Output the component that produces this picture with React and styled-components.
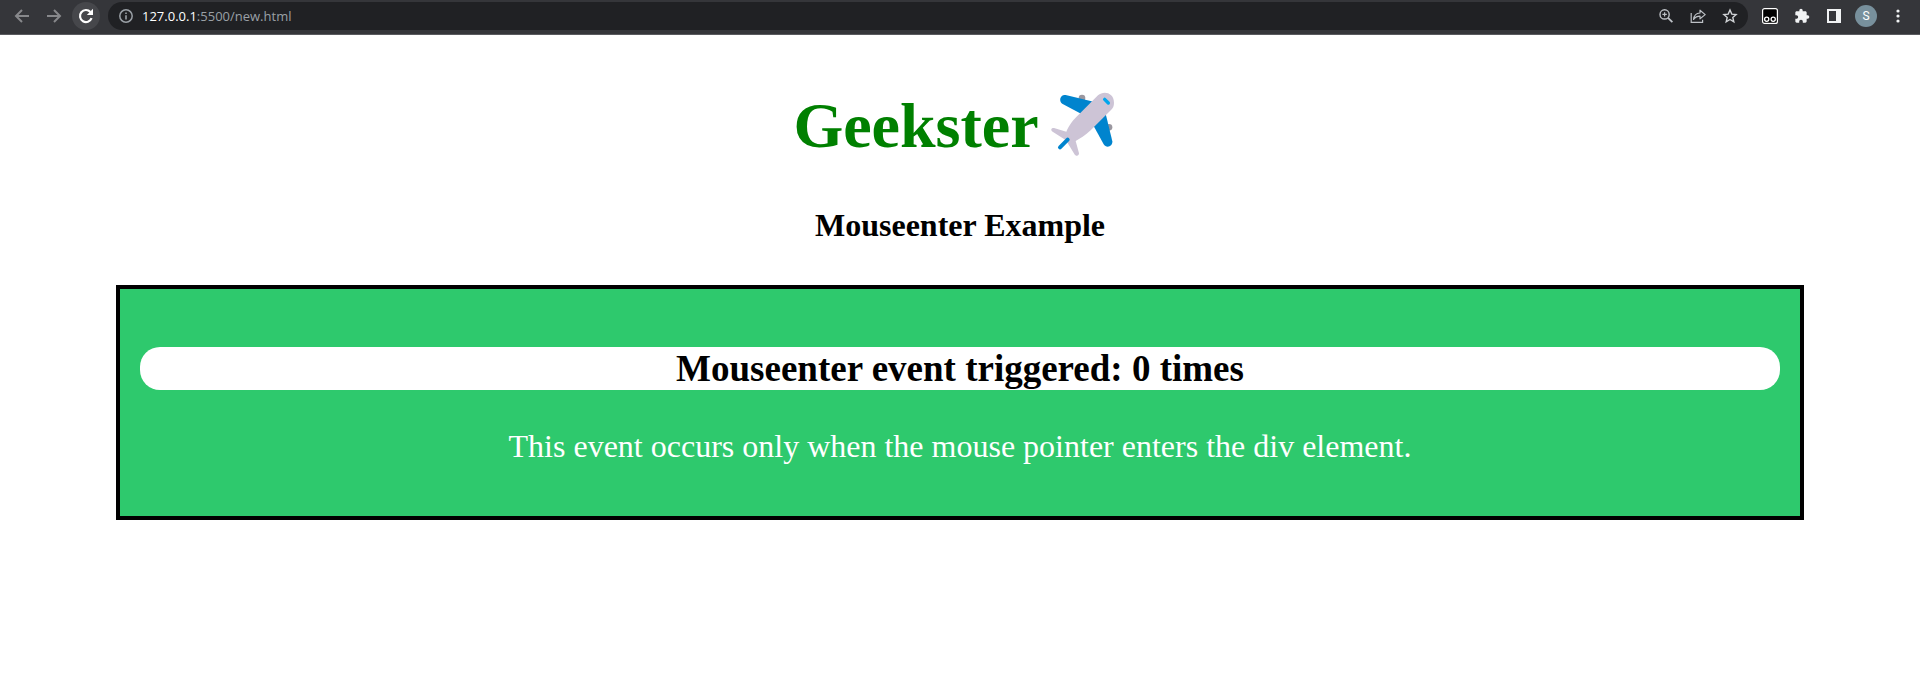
import React, { useState } from "react";
import styled, { createGlobalStyle } from "styled-components";

const GlobalStyle = createGlobalStyle`
  *, *::before, *::after { box-sizing: border-box; }
  body {
    margin: 0;
    background: #fff;
    color: #000;
    font-family: "Liberation Serif", "Times New Roman", serif;
  }
`;

const Toolbar = styled.header`
  display: flex;
  align-items: center;
  gap: 6px;
  padding: 2px 6px 4px;
  background: #35363a;
  border-bottom: 1px solid #5a5b5f;
`;

const IconGroup = styled.div`
  display: flex;
  align-items: center;
`;

const IconButton = styled.button`
  display: flex;
  align-items: center;
  justify-content: center;
  width: 32px;
  height: 28px;
  padding: 0;
  border: 0;
  background: none;
  color: ${(p) => p.$color || "#f1f3f4"};
`;

const Disc = styled.span`
  display: flex;
  align-items: center;
  justify-content: center;
  width: ${(p) => p.$size}px;
  height: ${(p) => p.$size}px;
  border-radius: 50%;
  background: ${(p) => p.$fill};
  color: #fff;
  font: 12px/22px Roboto, sans-serif;
`;

const Omnibox = styled.div`
  display: flex;
  flex: 1;
  align-items: center;
  min-width: 0;
  height: 28px;
  padding: 0 2px;
  border-radius: 14px;
  background: #202124;
`;

const Address = styled.a`
  flex: 1;
  min-width: 0;
  overflow: hidden;
  white-space: nowrap;
  color: #9aa0a6;
  text-decoration: none;
  font: 13px/20px "Open Sans", "Segoe UI", sans-serif;
`;

const Host = styled.span`
  color: #fff;
`;

const Page = styled.main`
  padding: 54px 116px 0;
  text-align: center;
  font-size: 32px;
  line-height: 37px;
`;

const Title = styled.h1`
  display: flex;
  justify-content: center;
  margin: 0 0 44px;
  color: green;
  font-size: 64px;
  line-height: 74px;
`;

const Subtitle = styled.h2`
  margin: 0 0 41px;
  font-size: 32px;
`;

const EventBox = styled.div`
  display: flow-root;
  padding: 20px;
  border: 4px solid #000;
  background: #2ec96d;
  color: #fff;
`;

const Counter = styled.h3`
  margin: 38px 0;
  border-radius: 20px;
  background: #fff;
  color: #000;
  font-size: 37px;
  line-height: 43px;
`;

const Note = styled.p`
  margin: 0 0 31px;
`;

function Icon({ size = 16, children, ...rest }) {
  return (
    <svg width={size} height={size} viewBox={`0 0 ${size} ${size}`} fill="none" stroke="currentColor" strokeWidth="1.6" aria-hidden="true" {...rest}>
      {children}
    </svg>
  );
}

function Plane() {
  return (
    <svg width="88" height="74" viewBox="-3 27 264 222" role="img" aria-label="airplane">
      <circle cx="126" cy="54" r="10" fill="#9a979f" />
      <circle cx="207" cy="142" r="10" fill="#9a979f" />
      <path d="M77 45 L164 66 L126 103 L68 72 C54 63 61 42 77 45Z" fill="#0084ce" />
      <path d="M197 101 L217 184 C218 201 198 205 191 193 L161 138Z" fill="#0084ce" />
      <path d="M174 46 C191 31 222 38 222 68 C222 78 219 84 213 90 L152 151 C136 166 119 177 107 183 L117 220 C117 230 106 229 103 222 L78 181 L38 155 C31 151 33 143 42 144 L79 155 C85 139 98 122 109 111Z" fill="#cdc4d6" />
      <path d="M194 58 L205 69" stroke="#00a6ed" strokeWidth="10" strokeLinecap="round" />
      <path d="M60 202 L83 179" stroke="#0084ce" strokeWidth="12" strokeLinecap="round" />
    </svg>
  );
}

function BrowserBar() {
  return (
    <Toolbar>
      <IconGroup>
        <IconButton aria-label="Back" $color="#87888b">
          <Icon strokeWidth="2"><path d="M15 8H2.500M8 2L2 8L8 14" /></Icon>
        </IconButton>
        <IconButton aria-label="Forward" $color="#87888b">
          <Icon strokeWidth="2"><path d="M1 8H13.500M8 2L14 8L8 14" /></Icon>
        </IconButton>
        <IconButton aria-label="Reload">
          <Disc $size={28} $fill="#46474b">
            <Icon strokeWidth="2.2">
              <path d="M13.6 10.2A6 6 0 1 1 12.4 3.9" />
              <path d="M15 .8V7H8.8Z" fill="currentColor" stroke="none" />
            </Icon>
          </Disc>
        </IconButton>
      </IconGroup>
      <Omnibox>
        <IconButton aria-label="Site information" $color="#9aa0a6">
          <Icon strokeWidth="1.5">
            <circle cx="8" cy="8" r="6.2" />
            <path d="M8 7.2V11.4M8 4.5V6" strokeWidth="1.6" />
          </Icon>
        </IconButton>
        <Address href="#"><Host>127.0.0.1</Host>:5500/new.html</Address>
        <IconButton aria-label="Zoom" $color="#bdc1c6">
          <Icon strokeWidth="1.4">
            <circle cx="6.6" cy="6.4" r="4.6" />
            <path d="M10 9.8L14.4 14.2" strokeWidth="1.8" />
            <path d="M6.6 4.2V8.6M4.4 6.4H8.8" strokeWidth="1.2" />
          </Icon>
        </IconButton>
        <IconButton aria-label="Share" $color="#bdc1c6">
          <Icon strokeWidth="1.2">
            <path d="M1.2 5V14.4H12.6V11.8" />
            <path d="M3.600 11.400C4 7.400 6.200 5.200 10 5V2.200L15.200 6.600L10 10.800V8.200C7.200 8.200 5.200 9.200 3.600 11.400Z" strokeLinejoin="round" />
          </Icon>
        </IconButton>
        <IconButton aria-label="Bookmark" $color="#d0d3d6">
          <Icon strokeWidth="1.4">
            <path d="M8 2L9.8 6.1L14.1 6.5L10.8 9.4L11.8 13.8L8 11.5L4.2 13.8L5.2 9.4L1.9 6.5L6.2 6.1Z" />
          </Icon>
        </IconButton>
      </Omnibox>
      <IconGroup>
        <IconButton aria-label="Tampermonkey">
          <Icon>
            <rect x=".6" y=".6" width="14.8" height="14.8" rx="2" fill="#000" stroke="#fff" strokeWidth="1.2" />
            <circle cx="4.7" cy="11.2" r="2.1" stroke="#fff" strokeWidth="1.3" />
            <circle cx="11.2" cy="11.2" r="2.1" stroke="#fff" strokeWidth="1.3" />
          </Icon>
        </IconButton>
        <IconButton aria-label="Extensions">
          <svg width="16" height="16" viewBox="0 0 24 24" fill="currentColor" aria-hidden="true">
            <path d="M20.5 11H19V7c0-1.100-.9-2-2-2h-4V3.500a2.500 2.500 0 0 0-5 0V5H4c-1.100 0-2 .9-2 2v3.800h1.500c1.500 0 2.700 1.200 2.700 2.700s-1.200 2.700-2.700 2.700H2V20c0 1.100.9 2 2 2h3.800v-1.500c0-1.500 1.200-2.700 2.700-2.700s2.700 1.200 2.700 2.700V22H17c1.100 0 2-.9 2-2v-4h1.500a2.500 2.500 0 0 0 0-5z" />
          </svg>
        </IconButton>
        <IconButton aria-label="Side panel">
          <Icon size={14} stroke="none" fill="currentColor">
            <path d="M0 0H14V14H0ZM2 2V12H9V2Z" fillRule="evenodd" />
          </Icon>
        </IconButton>
        <IconButton aria-label="Profile">
          <Disc $size={22} $fill="#78909c">S</Disc>
        </IconButton>
        <IconButton aria-label="Menu">
          <Icon stroke="none" fill="currentColor">
            <circle cx="8" cy="3" r="1.600" />
            <circle cx="8" cy="8" r="1.600" />
            <circle cx="8" cy="13" r="1.600" />
          </Icon>
        </IconButton>
      </IconGroup>
    </Toolbar>
  );
}

export default function App() {
  const [count, setCount] = useState(0);
  return (
    <>
      <GlobalStyle />
      <BrowserBar />
      <Page>
        <Title>Geekster<Plane /></Title>
        <Subtitle>Mouseenter Example</Subtitle>
        <EventBox onMouseEnter={() => setCount((n) => n + 1)}>
          <Counter>Mouseenter event triggered: {count} times</Counter>
          <Note>This event occurs only when the mouse pointer enters the div element.</Note>
        </EventBox>
      </Page>
    </>
  );
}
